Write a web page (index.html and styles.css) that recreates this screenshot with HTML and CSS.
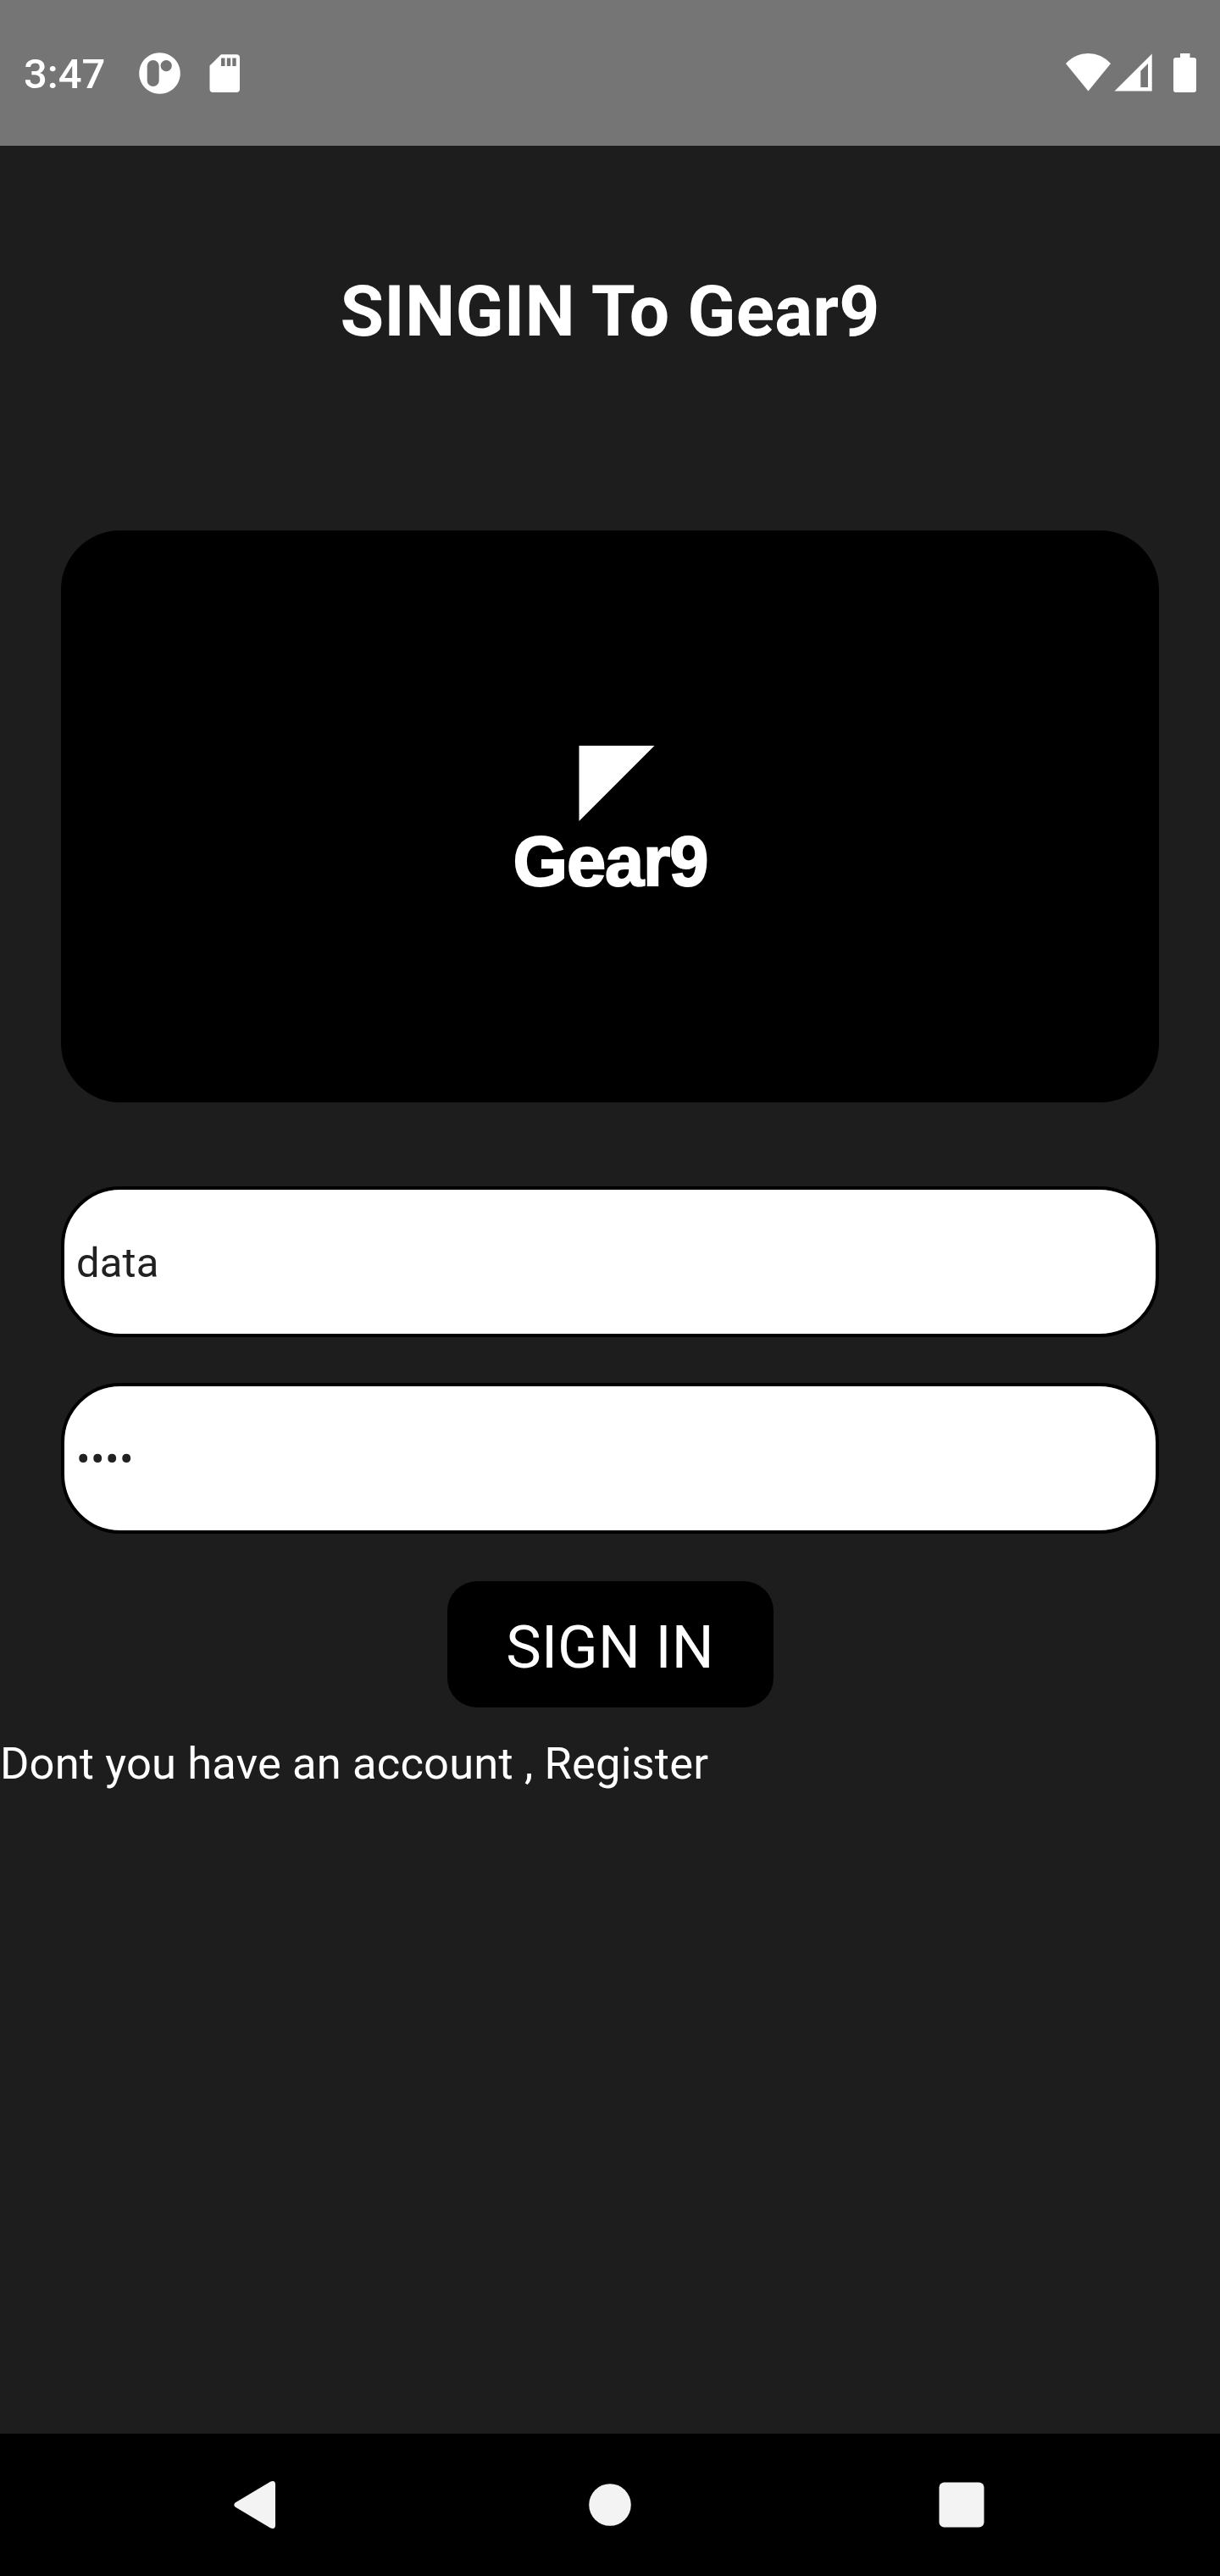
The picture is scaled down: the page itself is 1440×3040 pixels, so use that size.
FILE: index.html
```html
<!DOCTYPE html>
<html lang="en">
<head>
<meta charset="utf-8">
<title>Gear9</title>
<link rel="stylesheet" href="styles.css">
</head>
<body>
<div class="screen">
  <header class="status-bar">
    <span class="clock">3:47</span>
    <svg class="status-left" width="120" height="50" viewBox="0 0 120 50" fill="#fff">
      <path fill-rule="evenodd" d="M24.500 0.200a24.300 24.300 0 1 0 .01 0zM16.700 9a7 7 0 0 1 7 7v17a7 7 0 0 1-14 0V16a7 7 0 0 1 7-7zM32.200 9a6.600 6.600 0 1 1-.01 0z"/>
      <path fill-rule="evenodd" d="M97 2.200H115a4 4 0 0 1 4 4V43a4 4 0 0 1-4 4H87.500a4 4 0 0 1-4-4V15.500zM97 6.500V16h4.500V6.500zM103.800 6.500V16h4.400V6.500zM110.300 6.500V16h4.400V6.500z"/>
    </svg>
    <svg class="status-right" width="156" height="48" viewBox="0 0 156 48" fill="#fff">
      <path d="M0 13Q11 1 26.500 1T53 13L26.500 45.500z"/>
      <path fill-rule="evenodd" d="M101.700 1.500V45.500H57.500zM97 13L88.300 21.700V41H97z"/>
      <path d="M135 1h11.500v5H151a3 3 0 0 1 3 3v35a3 3 0 0 1-3 3H130a3 3 0 0 1-3-3V9a3 3 0 0 1 3-3h5z"/>
    </svg>
  </header>
  <main class="content">
    <h1 class="title">SINGIN To Gear9</h1>
    <div class="logo-card">
      <svg width="320" height="220" viewBox="560 855 320 220" fill="#fff">
        <path d="M683.500 880H772.500L683.500 969z"/>
        <text class="logo-text" x="605.500" y="1045" textLength="231">Gear9</text>
      </svg>
    </div>
    <form class="form">
      <input class="field" type="text" value="data" aria-label="Name">
      <div class="field field-password"><span class="mask">••••</span></div>
      <button class="submit" type="button">SIGN IN</button>
    </form>
    <p class="register">Dont you have an account , Register</p>
  </main>
  <nav class="nav-bar">
    <svg width="1440" height="168" viewBox="0 0 1440 168" fill="#f3f3f3">
      <path d="M278 81.200L319 56.800Q325 54.500 325 60V108Q325 113.500 319 111.200L278 86.800Q274.500 84 278 81.200z"/>
      <circle cx="720" cy="84" r="24.800"/>
      <rect x="1108.500" y="57.500" width="53" height="53" rx="6"/>
    </svg>
  </nav>
</div>
</body>
</html>
```
FILE: styles.css
```css
* {
  box-sizing: border-box;
}

body {
  margin: 0;
  background: #1d1d1d;
  font-family: Roboto, sans-serif;
}

.screen {
  display: flex;
  flex-direction: column;
  width: 1440px;
  height: 3040px;
}

.status-bar {
  display: flex;
  align-items: flex-start;
  height: 172px;
  padding: 0 28px;
  background: #757575;
  color: #fff;
}

.clock {
  width: 136px;
  margin-top: 59px;
  font-size: 49px;
  font-weight: 500;
  line-height: 58px;
}

.status-left {
  margin-top: 62px;
}

.status-right {
  margin: 62px -2px 0 auto;
}

.content {
  display: flex;
  flex: 1;
  flex-direction: column;
  color: #fff;
}

.title {
  margin: 146px 0 0;
  font-size: 84px;
  font-weight: 700;
  letter-spacing: 0.12px;
  line-height: 100px;
  text-align: center;
}

.logo-card {
  display: flex;
  align-items: center;
  justify-content: center;
  height: 675px;
  margin: 208px 72px 0;
  padding-top: 3px;
  border-radius: 70px;
  background: #000;
}

.logo-text {
  font-family: "Liberation Sans", Arial, sans-serif;
  font-size: 83px;
  font-weight: 700;
  stroke: #fff;
  stroke-width: 2px;
}

.form {
  display: flex;
  flex-direction: column;
  margin: 99px 72px 0;
}

.field {
  display: block;
  width: 100%;
  height: 178px;
  margin-bottom: 54px;
  padding: 2px 14px 0;
  border: 4px solid #000;
  border-radius: 70px;
  background: #fff;
  color: #212121;
  font-family: inherit;
  font-size: 49px;
  letter-spacing: 0.15px;
  line-height: 58px;
}

.field-password {
  display: flex;
  align-items: center;
  padding-top: 4px;
  letter-spacing: 0.5px;
}

.submit {
  align-self: center;
  width: 385px;
  height: 149px;
  margin-top: 2px;
  padding: 6px 0 0;
  border: 0;
  border-radius: 35px;
  background: #000;
  color: #fff;
  font-family: inherit;
  font-size: 70px;
  letter-spacing: 0.15px;
}

.register {
  margin: 35px 0 0;
  font-size: 52.5px;
  letter-spacing: 0.15px;
  line-height: 62px;
}

.nav-bar {
  height: 168px;
  background: #000;
}

.nav-bar svg {
  display: block;
}
```
